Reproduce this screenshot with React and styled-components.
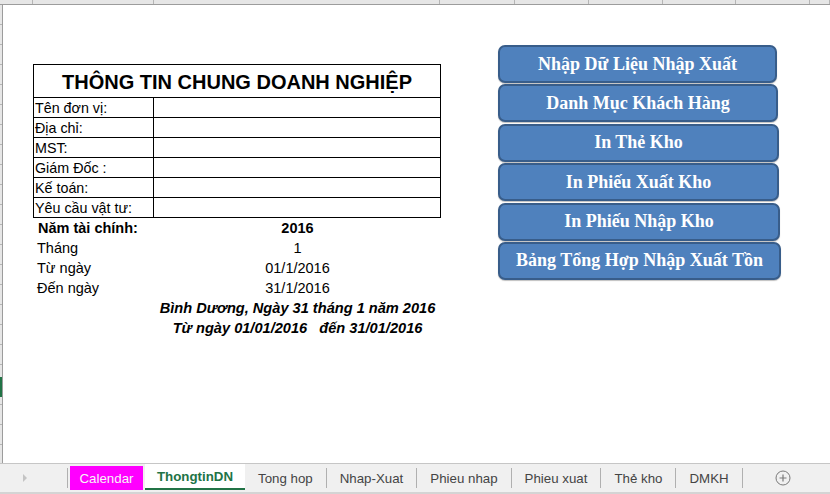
import React from "react";
import styled, { createGlobalStyle } from "styled-components";

const GlobalStyle = createGlobalStyle`
  html, body {
    margin: 0;
    padding: 0;
    background: #ffffff;
  }
  body {
    font-family: "Liberation Sans", Arial, sans-serif;
    overflow: hidden;
  }
`;

const columns = [33, 121, 286, 75, 74, 74, 73, 74, 20];

const infoRows = [
  "Tên đơn vị:",
  "Địa chỉ:",
  "MST:",
  "Giám Đốc :",
  "Kế toán:",
  "Yêu cầu vật tư:",
];

const buttons = [
  { title: "Nhập Dữ Liệu Nhập Xuất", width: 279 },
  { title: "Danh Mục Khách Hàng", width: 280 },
  { title: "In Thẻ Kho", width: 281 },
  { title: "In Phiếu Xuất Kho", width: 281 },
  { title: "In Phiếu Nhập Kho", width: 282 },
  { title: "Bảng Tổng Hợp Nhập Xuất Tồn", width: 283 },
];

const tabs = ["Tong hop", "Nhap-Xuat", "Phieu nhap", "Phieu xuat", "Thẻ kho", "DMKH"];

export default function App() {
  return (
    <Page>
      <GlobalStyle />
      <ColHeader>
        {columns.map((w, i) => (
          <ColCell key={i} $w={w} />
        ))}
      </ColHeader>

      <Middle>
        <RowHeader>
          <SelectedRow />
        </RowHeader>
        <Sheet>
          <LeftBlock>
            <InfoTable>
              <TitleRow>THÔNG TIN CHUNG DOANH NGHIỆP</TitleRow>
              {infoRows.map((label) => (
                <InfoRow key={label}>
                  <LabelCell>{label}</LabelCell>
                  <ValueCell />
                </InfoRow>
              ))}
            </InfoTable>

            <SummaryRow>
              <SummaryLabel $bold>Năm tài chính:</SummaryLabel>
              <SummaryValue $bold>2016</SummaryValue>
            </SummaryRow>
            <SummaryRow>
              <SummaryLabel>Tháng</SummaryLabel>
              <SummaryValue>1</SummaryValue>
            </SummaryRow>
            <SummaryRow>
              <SummaryLabel>Từ ngày</SummaryLabel>
              <SummaryValue>01/1/2016</SummaryValue>
            </SummaryRow>
            <SummaryRow>
              <SummaryLabel>Đến ngày</SummaryLabel>
              <SummaryValue>31/1/2016</SummaryValue>
            </SummaryRow>
            <SummaryRow>
              <span />
              <SignLine>Bình Dương, Ngày 31 tháng 1 năm 2016</SignLine>
            </SummaryRow>
            <SummaryRow>
              <span />
              <SignLine>Từ ngày 01/01/2016&nbsp;&nbsp;&nbsp;đến 31/01/2016</SignLine>
            </SummaryRow>
          </LeftBlock>

          <ButtonStack>
            {buttons.map((b) => (
              <MacroButton key={b.title} $w={b.width}>
                {b.title}
              </MacroButton>
            ))}
          </ButtonStack>
        </Sheet>
      </Middle>

      <TabBar>
        <NavArea>
          <NavArrow />
        </NavArea>
        <CalendarTab>Calendar</CalendarTab>
        <ActiveTab>ThongtinDN</ActiveTab>
        {tabs.map((t) => (
          <SheetTab key={t}>{t}</SheetTab>
        ))}
        <AddSheet>
          <svg width="16" height="16" viewBox="0 0 16 16">
            <circle cx="8" cy="8" r="7" fill="none" stroke="#7a7a7a" strokeWidth="1" />
            <path d="M8 4.5v7M4.5 8h7" stroke="#7a7a7a" strokeWidth="1.2" />
          </svg>
        </AddSheet>
      </TabBar>
    </Page>
  );
}

const Page = styled.div`
  width: 830px;
  height: 494px;
  display: flex;
  flex-direction: column;
  background: #fff;
`;

const ColHeader = styled.div`
  height: 4px;
  display: flex;
  background: #e6e6e6;
  border-bottom: 1px solid #9c9c9c;
  flex-shrink: 0;
`;

const ColCell = styled.div`
  width: ${(p) => p.$w}px;
  flex-shrink: 0;
  border-right: 1px solid #b5b5b5;
  box-sizing: border-box;
`;

const Middle = styled.div`
  flex: 1;
  display: flex;
  min-height: 0;
`;

const RowHeader = styled.div`
  width: 3px;
  flex-shrink: 0;
  background: repeating-linear-gradient(
    to bottom,
    #e6e6e6 0px,
    #e6e6e6 19px,
    #b5b5b5 19px,
    #b5b5b5 20px
  );
  border-right: 1px solid #9c9c9c;
  box-sizing: border-box;
  padding-top: 372px;
`;

const SelectedRow = styled.div`
  width: 2px;
  height: 20px;
  background: #217346;
`;

const Sheet = styled.div`
  flex: 1;
  display: flex;
  align-items: flex-start;
  padding-left: 30px;
`;

const LeftBlock = styled.div`
  width: 408px;
  margin-top: 59px;
  flex-shrink: 0;
`;

const InfoTable = styled.div`
  border: 1px solid #000;
  box-sizing: border-box;
`;

const TitleRow = styled.div`
  height: 32px;
  display: flex;
  align-items: center;
  justify-content: center;
  font-weight: bold;
  font-size: 20px;
  color: #000;
  padding-top: 2px;
  box-sizing: border-box;
`;

const InfoRow = styled.div`
  display: grid;
  grid-template-columns: 120px 1fr;
  height: 20px;
  border-top: 1px solid #000;
  box-sizing: border-box;
`;

const LabelCell = styled.div`
  border-right: 1px solid #000;
  font-size: 14.3px;
  line-height: 20px;
  padding-left: 1px;
  color: #000;
  white-space: nowrap;
  overflow: hidden;
`;

const ValueCell = styled.div``;

const SummaryRow = styled.div`
  display: grid;
  grid-template-columns: 121px 1fr;
  height: 20px;
  align-items: center;
`;

const SummaryLabel = styled.div`
  font-size: 14.5px;
  font-weight: ${(p) => (p.$bold ? "bold" : "normal")};
  padding-left: ${(p) => (p.$bold ? 5 : 4)}px;
  white-space: nowrap;
  color: #000;
`;

const SummaryValue = styled.div`
  font-size: 14.5px;
  font-weight: ${(p) => (p.$bold ? "bold" : "normal")};
  text-align: center;
  color: #000;
`;

const SignLine = styled.div`
  font-size: 14.6px;
  font-weight: bold;
  font-style: italic;
  text-align: center;
  white-space: nowrap;
  color: #000;
`;

const ButtonStack = styled.div`
  margin-top: 40px;
  margin-left: 57px;
  display: flex;
  flex-direction: column;
  gap: 1.4px;
`;

const MacroButton = styled.div`
  width: ${(p) => p.$w}px;
  height: 38px;
  box-sizing: border-box;
  background: #4f81bd;
  border: 2px solid #385d8a;
  border-radius: 7px;
  box-shadow: 0 1px 1px rgba(0, 0, 0, 0.25);
  display: flex;
  align-items: center;
  justify-content: center;
  font-family: "Liberation Serif", "Times New Roman", serif;
  font-weight: bold;
  font-size: 18px;
  color: #fff;
  white-space: nowrap;
`;

const TabBar = styled.div`
  height: 31px;
  flex-shrink: 0;
  display: flex;
  align-items: stretch;
  background: #f0f0f0;
  border-top: 1px solid #c6c6c6;
  border-bottom: 2px solid #d4d4d4;
  box-sizing: border-box;
  font-size: 13.3px;
  color: #444;
`;

const NavArea = styled.div`
  width: 68px;
  display: flex;
  align-items: center;
  padding-left: 23px;
  box-sizing: border-box;
  border-right: 1px solid #b0b0b0;
  margin: 4px 0 4px;
`;

const NavArrow = styled.div`
  width: 0;
  height: 0;
  border-left: 4px solid #c4c4c4;
  border-top: 4px solid transparent;
  border-bottom: 4px solid transparent;
`;

const CalendarTab = styled.div`
  margin: 2px;
  width: 73px;
  background: #ff00ff;
  color: #f6f6f6;
  display: flex;
  align-items: center;
  justify-content: center;
`;

const ActiveTab = styled.div`
  width: 100px;
  background: #fff;
  color: #217346;
  font-weight: bold;
  display: flex;
  align-items: center;
  justify-content: center;
  border-bottom: 2px solid #217346;
  margin-bottom: 2px;
  box-sizing: border-box;
`;

const SheetTab = styled.div`
  display: flex;
  align-items: center;
  padding: 0 13px;
  margin: 4px 0 4px;
  border-right: 1px solid #b0b0b0;
  white-space: nowrap;
  color: #444;
`;

const AddSheet = styled.div`
  display: flex;
  align-items: center;
  margin-left: 32px;
`;
